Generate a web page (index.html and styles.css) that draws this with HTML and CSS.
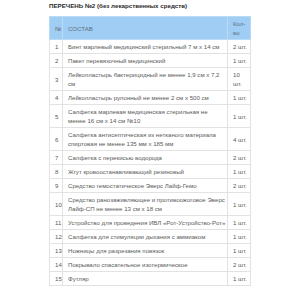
FILE: index.html
```html
<!DOCTYPE html>
<html lang="ru">
<head>
<meta charset="utf-8">
<link rel="stylesheet" href="styles.css">
</head>
<body>
<div class="wrap">
  <p class="title">ПЕРЕЧЕНЬ №2 (без лекарственных средств)</p>
  <table class="list">
    <colgroup><col class="c-num"><col class="c-name"><col class="c-qty"></colgroup>
    <thead>
      <tr><th>№</th><th>СОСТАВ</th><th>Кол-во</th></tr>
    </thead>
    <tbody>
      <tr><td>1</td><td>Бинт марлевый медицинский стерильный 7 м х 14 см</td><td>2 шт.</td></tr>
      <tr><td>2</td><td>Пакет перевязочный медицинский</td><td>1 шт.</td></tr>
      <tr><td>3</td><td>Лейкопластырь бактерицидный не менее 1,9 см х 7,2 см</td><td>10 шт.</td></tr>
      <tr><td>4</td><td>Лейкопластырь рулонный не менее 2 см х 500 см</td><td>1 шт.</td></tr>
      <tr><td>5</td><td>Салфетка марлевая медицинская стерильная не менее 16 см х 14 см №10</td><td>1 шт.</td></tr>
      <tr><td>6</td><td>Салфетка антисептическая из нетканого материала спиртовая не менее 135 мм х 185 мм</td><td>4 шт.</td></tr>
      <tr><td>7</td><td>Салфетка с перекисью водорода</td><td>2 шт.</td></tr>
      <tr><td>8</td><td>Жгут кровоостанавливающий резиновый</td><td>1 шт.</td></tr>
      <tr><td>9</td><td>Средство гемостатическое Эверс Лайф-Гемо</td><td>2 шт.</td></tr>
      <tr><td>10</td><td>Средство ранозаживляющее и противоожоговое Эверс Лайф-СП не менее 13 см х 18 см</td><td>1 шт.</td></tr>
      <tr><td>11</td><td class="nowrap">Устройство для проведения ИВЛ «Рот-Устройство-Рот»</td><td>1 шт.</td></tr>
      <tr><td>12</td><td>Салфетка для стимуляции дыхания с аммиаком</td><td>1 шт.</td></tr>
      <tr><td>13</td><td>Ножницы для разрезания повязок</td><td>1 шт.</td></tr>
      <tr><td>14</td><td>Покрывало спасательное изотермическое</td><td>2 шт.</td></tr>
      <tr><td>15</td><td>Футляр</td><td>1 шт.</td></tr>
    </tbody>
  </table>
</div>
</body>
</html>
```

FILE: styles.css
```css
html, body {
  margin: 0;
  padding: 0;
  background: #ffffff;
}

.wrap {
  padding: 2px 0 0 49px;
  width: 202px;
  font-family: "Liberation Sans", Arial, sans-serif;
}

.title {
  margin: 0 0 6px 0;
  font-size: 6.2px;
  line-height: 8px;
  font-weight: bold;
  color: #2a2a2a;
}

.list {
  width: 202px;
  border-collapse: collapse;
  table-layout: fixed;
  font-size: 6.1px;
  line-height: 9px;
  color: #5a5a5a;
}

.c-num { width: 13px; }
.c-qty { width: 23px; }

.list th,
.list td {
  border: 1px solid #e2e2e2;
  padding: 2px 1px 2px 5px;
  text-align: left;
  vertical-align: middle;
  font-weight: normal;
}

.list .nowrap {
  white-space: nowrap;
}

.list th {
  background: #9fcdf3;
  color: #5f6f80;
  border-color: #b9dbf6;
}

.list td:first-child,
.list th:first-child {
  padding-left: 5px;
  padding-right: 0;
}
```
